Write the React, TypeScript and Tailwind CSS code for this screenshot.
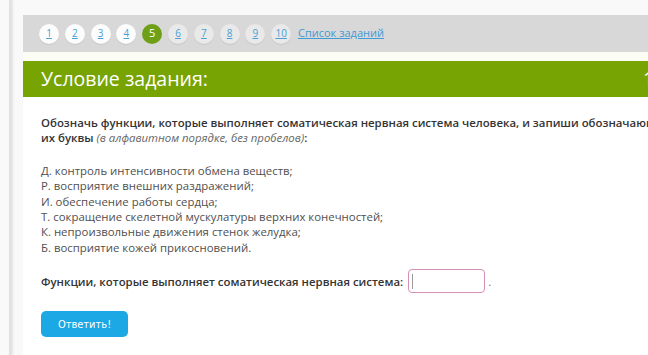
const pages = [1, 2, 3, 4, 5, 6, 7, 8, 9, 10];
const CURRENT = 5;

const options = [
  "Д. контроль интенсивности обмена веществ;",
  "Р. восприятие внешних раздражений;",
  "И. обеспечение работы сердца;",
  "Т. сокращение скелетной мускулатуры верхних конечностей;",
  "К. непроизвольные движения стенок желудка;",
  "Б. восприятие кожей прикосновений.",
];

function PageDot({ n }: { n: number }) {
  if (n === CURRENT) {
    return (
      <span className="flex size-[20px] items-center justify-center rounded-full bg-[#6f9f16] text-[11px] text-white">
        {n}
      </span>
    );
  }
  const bg = n < CURRENT ? "bg-[#fcfcfc]" : "bg-[#e9e9e9]";
  return (
    <span
      className={`flex size-[20px] items-center justify-center rounded-full ${bg} text-[10px] text-[#4aa0d6] underline shadow-[0_1px_1px_rgba(0,0,0,0.08)]`}
    >
      {n}
    </span>
  );
}

export default function App() {
  return (
    <div
      className="flex h-[355px] w-[648px] overflow-hidden bg-[#f9f9f9]"
      style={{ fontFamily: '"Open Sans", "Noto Sans", sans-serif' }}
    >
      {/* left frame edge */}
      <div className="ml-[9px] w-[3px] shrink-0 bg-[#e2e2e2] shadow-[1px_0_2px_rgba(0,0,0,0.08)]" />

      <div className="ml-[11px] flex w-[720px] shrink-0 flex-col pt-[15px]">
        {/* Pagination */}
        <div className="flex h-[37px] items-center gap-[5.8px] bg-[#d8d8d8] pl-[16px]">
          {pages.map((n) => (
            <PageDot key={n} n={n} />
          ))}
          <a className="ml-[1px] text-[11px] text-[#3f9ad6] underline">Список заданий</a>
        </div>

        <div className="h-[9px] bg-[#fbfcf3]" />

        {/* Header */}
        <div className="flex h-[36px] items-center bg-[#77a402] pl-[18px] text-white">
          <span className="w-[602px] text-[19.5px] leading-none">Условие задания:</span>
          <span className="text-[19.5px] leading-none">1 б.</span>
        </div>

        {/* Body */}
        <div className="flex-1 bg-white pl-[18px] pt-[18px] text-[11.4px] leading-[15.4px]">
          <p className="font-semibold text-[#333]">
            Обозначь функции, которые выполняет соматическая нервная система человека, и запиши обозначающие
            <br />
            их буквы <span className="font-normal italic text-[#666]">(в алфавитном порядке, без пробелов)</span>:
          </p>
          <div className="mt-[17px] text-[#4f4f4f]">
            {options.map((o) => (
              <div key={o}>{o}</div>
            ))}
          </div>
          <div className="mt-[14px] flex items-center font-semibold text-[#333]">
            <span>Функции, которые выполняет соматическая нервная система:</span>
            <span className="ml-[5px] flex h-[24px] w-[77px] items-center rounded-[4px] border-[1.5px] border-[#d690b6] bg-white pl-[3px]">
              <span className="h-[15px] w-px bg-[#999]" />
            </span>
            <span className="ml-[3px] font-normal text-[#777]">.</span>
          </div>
          <button
            type="button"
            className="mt-[18px] h-[26px] w-[87px] rounded-[5px] bg-[#1ba8e5] text-[11px] text-white"
            style={{ fontFamily: '"DejaVu Sans Condensed", "DejaVu Sans", sans-serif' }}
          >
            Ответить!
          </button>
        </div>
      </div>
    </div>
  );
}
